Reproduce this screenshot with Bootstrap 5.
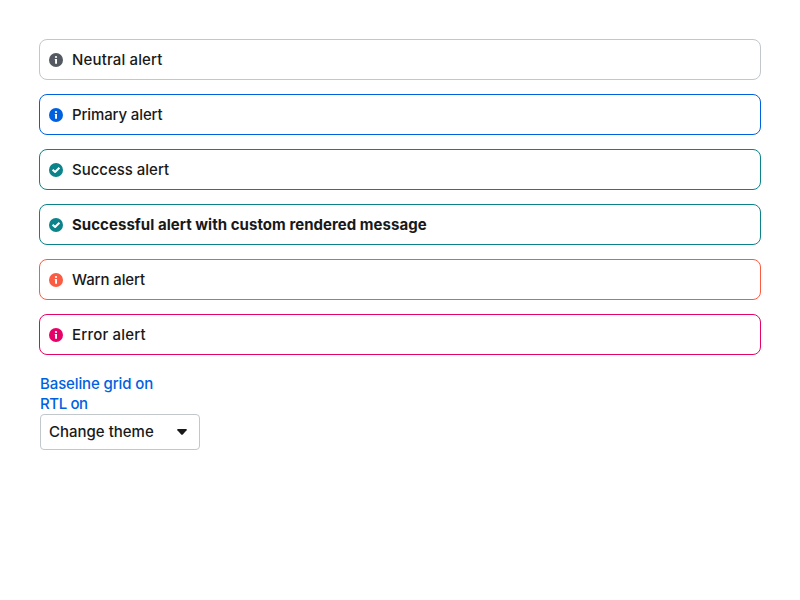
<!DOCTYPE html>
<html lang="en">
<head>
<meta charset="utf-8">
<meta name="viewport" content="width=device-width, initial-scale=1">
<title>Alerts</title>
<link href="https://cdn.jsdelivr.net/npm/bootstrap@5.3.0/dist/css/bootstrap.min.css" rel="stylesheet">
<style>
  body { font-family: Inter, "Liberation Sans", sans-serif; font-size: 15px; font-weight: 500; line-height: 20px; color: #191919; background: #fff; }
  .page { padding: 39px; }
  .stack { gap: 14px; }
  .notice { --tone: #545860; height: 41px; padding: 0 9px; gap: 9px; border: 1px solid var(--tone); border-radius: 8px; color: #191919; }
  .notice svg { width: 14px; height: 14px; color: var(--tone); }
  .notice-neutral { border-color: #c1c7cb; letter-spacing: .15px; }
  .notice-primary { --tone: #0061e0; letter-spacing: -.13px; }
  .notice-success { --tone: #0c838a; letter-spacing: -.02px; }
  .notice-warn { --tone: #fa5b42; letter-spacing: -.1px; }
  .notice-error { --tone: #e60368; letter-spacing: .2px; }
  .strong-text { letter-spacing: .04px; }
  .tools { margin: 19px 1px 0; }
  .tools a { color: #0061e0; letter-spacing: -.12px; }
  .tools .short-link { letter-spacing: -.4px; }
  .theme-btn, .theme-btn:hover { width: 160px; height: 36px; padding: 0 12px 0 8px; border: 1px solid #c1c7cb; border-radius: 4px; font-size: 15px; font-weight: 500; line-height: 20px; color: #191919; background: #fff; }
</style>
</head>
<body>
<svg class="d-none" aria-hidden="true">
  <symbol id="info" viewBox="0 0 14 14"><circle cx="7" cy="7" r="7" fill="currentColor"/><circle cx="7" cy="4" r="1.1" fill="#fff"/><path d="M5.8 5.9H8V10.8H6.1V6.9H5.8Z" fill="#fff"/></symbol>
  <symbol id="check" viewBox="0 0 14 14"><circle cx="7" cy="7" r="7" fill="currentColor"/><path d="M3.6 6.8L6.1 9L10.4 4.8" fill="none" stroke="#fff" stroke-width="2" stroke-linejoin="round"/></symbol>
</svg>
<main class="page">
  <div class="stack d-flex flex-column">
    <div class="notice notice-neutral alert m-0 d-flex align-items-center" role="alert"><svg><use href="#info"/></svg><span>Neutral alert</span></div>
    <div class="notice notice-primary alert m-0 d-flex align-items-center" role="alert"><svg><use href="#info"/></svg><span>Primary alert</span></div>
    <div class="notice notice-success alert m-0 d-flex align-items-center" role="alert"><svg><use href="#check"/></svg><span>Success alert</span></div>
    <div class="notice notice-success alert m-0 d-flex align-items-center" role="alert"><svg><use href="#check"/></svg><span class="strong-text fw-bold">Successful alert with custom rendered message</span></div>
    <div class="notice notice-warn alert m-0 d-flex align-items-center" role="alert"><svg><use href="#info"/></svg><span>Warn alert</span></div>
    <div class="notice notice-error alert m-0 d-flex align-items-center" role="alert"><svg><use href="#info"/></svg><span>Error alert</span></div>
  </div>
  <div class="tools d-flex flex-column align-items-start">
    <a class="text-decoration-none" href="#">Baseline grid on</a>
    <a class="short-link text-decoration-none" href="#">RTL on</a>
    <button type="button" class="theme-btn btn d-flex align-items-center justify-content-between"><span>Change theme</span><svg width="10" height="6" viewBox="0 0 10 6"><path d="M1 0H9Q10.3 .2 9.6 1.2L5.8 5.5Q5 6.2 4.2 5.5L.4 1.2Q-.3 .2 1 0Z" fill="#191919"/></svg></button>
  </div>
</main>
<script src="https://cdn.jsdelivr.net/npm/bootstrap@5.3.0/dist/js/bootstrap.bundle.min.js"></script>
</body>
</html>
